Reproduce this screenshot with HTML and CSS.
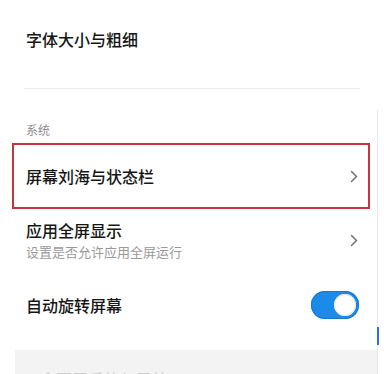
FILE: index.html
```html
<!DOCTYPE html>
<html lang="zh-CN">
<head>
<meta charset="utf-8">
<title>显示设置</title>
<link rel="stylesheet" href="styles.css">
</head>
<body>
<div class="screen">
  <main class="content">
    <div class="row row-top">
      <span class="title">字体大小与粗细</span>
    </div>
    <div class="divider"></div>
    <div class="section-label">系统</div>
    <div class="row row-highlight">
      <span class="title">屏幕刘海与状态栏</span>
      <svg class="chevron" width="8" height="13" viewBox="0 0 8 13"><polyline points="1.5,1.5 6.5,6.5 1.5,11.5" fill="none" stroke="#707070" stroke-width="1.5" stroke-linecap="round" stroke-linejoin="round"/></svg>
    </div>
    <div class="row row-app">
      <div class="texts">
        <span class="title title-tight">应用全屏显示</span>
        <span class="subtitle">设置是否允许应用全屏运行</span>
      </div>
      <svg class="chevron" width="8" height="13" viewBox="0 0 8 13"><polyline points="1.5,1.5 6.5,6.5 1.5,11.5" fill="none" stroke="#707070" stroke-width="1.5" stroke-linecap="round" stroke-linejoin="round"/></svg>
    </div>
    <div class="row row-toggle">
      <span class="title">自动旋转屏幕</span>
      <div class="switch"><div class="knob"></div></div>
    </div>
    <div class="panel">
      <span class="panel-text">全面屏手势与导航</span>
    </div>
  </main>
  <aside class="side">
    <div class="track"><div class="thumb"></div></div>
  </aside>
</div>
</body>
</html>
```

FILE: styles.css
```css
html, body {
  margin: 0;
  padding: 0;
  background: #ffffff;
  overflow: hidden;
}
body {
  font-family: "Noto Sans CJK SC", "Noto Sans", sans-serif;
  color: #1d1d1d;
}
.screen {
  display: flex;
  width: 384px;
  height: 374px;
  overflow: hidden;
}
.content {
  width: 377px;
  flex: none;
  display: flex;
  flex-direction: column;
}
.content > * {
  flex-shrink: 0;
}
.row {
  display: flex;
  align-items: center;
  justify-content: space-between;
  box-sizing: border-box;
}
.title {
  font-size: 16px;
  line-height: 20px;
  font-weight: 500;
  color: #161616;
}
.title-tight {
  line-height: 23px;
}
.row-top {
  height: 77px;
  padding-left: 26px;
}
.divider {
  margin: 11px 17px 0 24px;
  height: 1px;
  background: #ececec;
}
.section-label {
  margin-top: 33px;
  padding-left: 26px;
  font-size: 12px;
  line-height: 16px;
  color: #8c8c8c;
}
.row-highlight {
  margin: 5px 7px 0 12px;
  height: 66px;
  border: 2px solid #c9333b;
  padding: 0 10px 0 12px;
}
.row-app {
  height: 62px;
  padding: 0 19px 0 26px;
}
.texts {
  display: flex;
  flex-direction: column;
}
.subtitle {
  font-size: 13px;
  line-height: 19px;
  color: #9a9a9a;
}
.chevron {
  flex: none;
}
.row-toggle {
  height: 68px;
  padding: 0 18px 0 26px;
}
.switch {
  width: 48px;
  height: 28px;
  border-radius: 14px;
  background: #1b8ae8;
  box-sizing: border-box;
  display: flex;
  align-items: center;
  justify-content: flex-end;
  padding-right: 3px;
  box-shadow: inset 0 0 0 1px #1779cf;
}
.knob {
  width: 22px;
  height: 22px;
  border-radius: 50%;
  background: #ffffff;
  box-shadow: inset 0 0 0 1px #e4e4e4;
}
.panel {
  margin: 11px 0 0 15px;
  flex: 1 0 auto;
  background: #f3f3f3;
  padding: 17px 0 0 25px;
}
.panel-text {
  font-size: 16px;
  line-height: 22px;
  color: #cfcfcf;
}
.side {
  flex: 1;
  display: flex;
  flex-direction: column;
  padding-top: 110px;
}
.track {
  flex: 1;
  border-left: 1px solid #e6e6e6;
  padding-top: 217px;
}
.thumb {
  width: 2px;
  height: 18px;
  margin-left: -1px;
  background: #2d6fe0;
}
```
